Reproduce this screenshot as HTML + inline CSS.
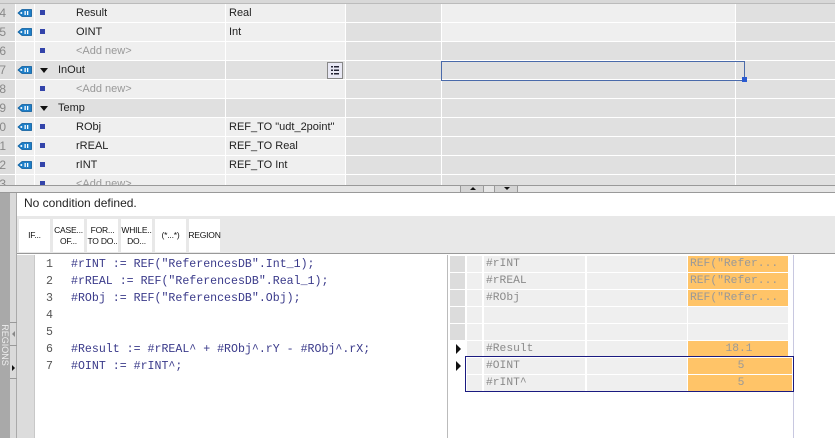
<!DOCTYPE html>
<html><head><meta charset="utf-8"><style>
*{margin:0;padding:0;box-sizing:border-box}
body{width:835px;height:438px;overflow:hidden;background:#fff;font-family:"Liberation Sans",sans-serif;font-size:11px;color:#222;position:relative}
.a{position:absolute}
.row{position:absolute;left:0;width:835px;height:19px}
.c{position:absolute;top:0;height:18px;line-height:18px;white-space:nowrap;overflow:hidden}
.code{font-family:"Liberation Mono",monospace;font-size:11.6px;color:#3a3a8a;white-space:pre}
.w{position:absolute;height:16px;line-height:16px;font-family:"Liberation Mono",monospace;font-size:11.3px;color:#8a8a8a;white-space:pre;overflow:hidden}
.btn{position:absolute;top:219px;width:31px;height:33px;background:#fff;font-size:8.5px;text-align:center;display:flex;align-items:center;justify-content:center;line-height:11px;color:#111;letter-spacing:-0.2px}
</style></head><body>
<div class="a" style="left:0;top:0;width:835px;height:4px;background:#d8d8d8;border-bottom:1px solid #bbb"></div>
<div id="rows"></div>
<script>
var rows=[
["4",1,"sq","Result","Real",0,0],
["5",1,"sq","OINT","Int",0,0],
["6",0,"sq","&lt;Add new&gt;","",0,1],
["7",1,"tri","InOut","",1,0],
["8",0,"sq","&lt;Add new&gt;","",0,1],
["9",1,"tri","Temp","",1,0],
["10",1,"sq","RObj","REF_TO \"udt_2point\"",0,0],
["11",1,"sq","rREAL","REF_TO Real",0,0],
["12",1,"sq","rINT","REF_TO Int",0,0],
["13",0,"sq","&lt;Add new&gt;","",0,1]];
var h="";
rows.forEach(function(r,i){
 var t=4+i*19, sec=r[5];
 var nb=sec?"#e0e0e0":"#efefef";
 var lb=(i<2)?"#efefef":"#e0e0e0";
 h+='<div class="row" style="top:'+t+'px">';
 h+='<div class="c" style="left:0;width:15px;background:#dcdcdc"></div>';
 h+='<div class="c" style="left:-20px;width:26px;color:#888;text-align:right;font-size:12px">'+r[0]+'</div>';
 h+='<div class="c" style="left:16px;width:18px;background:'+nb+'">'+(r[1]?'<svg width="18" height="18"><path d="M2 9 L6 5.5 H15.5 V12.5 H6 Z" fill="#1e7fc8" stroke="#0a5a9a" stroke-width="0.8"/><circle cx="5.3" cy="9" r="1" fill="#fff"/><rect x="8.5" y="7" width="1.3" height="4" fill="#fff"/><rect x="11" y="7" width="1.3" height="4" fill="#fff"/></svg>':'')+'</div>';
 h+='<div class="c" style="left:35px;width:190px;background:'+nb+'"></div>';
 if(r[2]=="sq") h+='<div class="a" style="left:40px;top:6px;width:5px;height:5px;background:#3344aa"></div>';
 else h+='<div class="a" style="left:40px;top:7px;width:0;height:0;border-left:4px solid transparent;border-right:4px solid transparent;border-top:5px solid #111"></div>';
 var nx=r[5]?58:76;
 h+='<div class="c" style="left:'+nx+'px;color:'+(r[6]?'#999':'#222')+'">'+r[3]+'</div>';
 h+='<div class="c" style="left:226px;width:119px;background:'+nb+';padding-left:3px">'+r[4].replace(/"/g,'&quot;')+'</div>';
 h+='<div class="c" style="left:346px;width:95px;background:#e0e0e0"></div>';
 h+='<div class="c" style="left:442px;width:293px;background:'+lb+'"></div>';
 h+='<div class="c" style="left:736px;width:99px;background:#e0e0e0"></div>';
 h+='</div>';
});
document.getElementById("rows").innerHTML=h;
</script>
<div class="a" style="left:327px;top:62px;width:16px;height:17px;border:1px solid #888;background:#e8e8f4"><svg width="14" height="15"><g fill="#223"><rect x="3" y="3" width="2" height="1.5"/><rect x="6" y="3" width="5" height="1.5"/><rect x="3" y="6.5" width="2" height="1.5"/><rect x="6" y="6.5" width="5" height="1.5"/><rect x="3" y="10" width="2" height="1.5"/><rect x="6" y="10" width="5" height="1.5"/></g></svg></div>
<div class="a" style="left:441px;top:61px;width:304px;height:20px;border:1px solid #4a6aaa"></div>
<div class="a" style="left:742px;top:77px;width:5px;height:5px;background:#2a5ad0"></div>
<div class="a" style="left:0;top:185px;width:835px;height:8px;background:#e6e6e6;border-top:1px solid #999;border-bottom:1px solid #999"></div>
<div class="a" style="left:460px;top:186px;width:24px;height:6px;background:#d4d4d4;border-left:1px solid #999;border-right:1px solid #999"><div class="a" style="left:9px;top:1px;border-left:3px solid transparent;border-right:3px solid transparent;border-bottom:3px solid #111"></div></div>
<div class="a" style="left:494px;top:186px;width:24px;height:6px;background:#d4d4d4;border-left:1px solid #999;border-right:1px solid #999"><div class="a" style="left:9px;top:1px;border-left:3px solid transparent;border-right:3px solid transparent;border-top:3px solid #111"></div></div>
<div class="a" style="left:0;top:193px;width:10px;height:245px;background:#a9a9a9"></div>
<div class="a" style="left:10px;top:193px;width:7px;height:245px;background:#dadada;border-right:1px solid #aaa"></div>
<div class="a" style="left:-18px;top:340px;width:46px;height:10px;transform:rotate(90deg);color:#eee;font-size:9px;line-height:10px;text-align:center">REGIONS</div>
<div class="a" style="left:10px;top:322px;width:7px;height:1px;background:#999"></div>
<div class="a" style="left:10px;top:345px;width:7px;height:1px;background:#999"></div>
<div class="a" style="left:10px;top:378px;width:7px;height:1px;background:#999"></div>
<div class="a" style="left:12px;top:331px;border-top:3px solid transparent;border-bottom:3px solid transparent;border-right:3px solid #888"></div>
<div class="a" style="left:12px;top:365px;border-top:3px solid transparent;border-bottom:3px solid transparent;border-left:3px solid #111"></div>
<div class="a" style="left:24px;top:196px;font-size:12px;color:#222">No condition defined.</div>
<div class="a" style="left:17px;top:216px;width:818px;height:38px;background:#e8e8e8;border-bottom:1px solid #999"></div>
<div class="btn" style="left:19px">IF...</div>
<div class="btn" style="left:53px">CASE...<br>OF...</div>
<div class="btn" style="left:87px">FOR...<br>TO DO..</div>
<div class="btn" style="left:121px">WHILE..<br>DO...</div>
<div class="btn" style="left:155px">(*...*)</div>
<div class="btn" style="left:189px">REGION</div>
<div class="a" style="left:17px;top:255px;width:18px;height:183px;background:#dcdcdc;border-right:1px solid #c8c8c8"></div>
<div class="a code" style="left:46px;top:256px;line-height:17px;color:#555">1
2
3
4
5
6
7</div>
<div class="a code" style="left:71px;top:256px;line-height:17px">#rINT := REF("ReferencesDB".Int_1);
#rREAL := REF("ReferencesDB".Real_1);
#RObj := REF("ReferencesDB".Obj);


#Result := #rREAL^ + #RObj^.rY - #RObj^.rX;
#OINT := #rINT^;</div>
<div class="a" style="left:447px;top:255px;width:1px;height:183px;background:#bbb"></div>
<div class="a" style="left:793px;top:255px;width:1px;height:183px;background:#c8c8e0"></div>
<div id="w"></div>
<script>
var wr=[["#rINT","REF(\"Refer..."],["#rREAL","REF(\"Refer..."],["#RObj","REF(\"Refer..."],["",""],["",""],["#Result","18.1"],["#OINT","5"],["#rINT^","5"]];
var g="";
wr.forEach(function(r,i){var t=256+i*17;var or=r[1]!=="";var wide=i>=6;
g+='<div class="w" style="left:450px;top:'+t+'px;width:15px;background:'+(i>=5?'#fff':'#dcdcdc')+'"></div>';
if(i==5||i==6) g+='<div class="a" style="left:456px;top:'+(t+3)+'px;border-top:5px solid transparent;border-bottom:5px solid transparent;border-left:5px solid #111"></div>';
g+='<div class="w" style="left:467px;top:'+t+'px;width:15px;background:#efefef"></div>';
g+='<div class="w" style="left:484px;top:'+t+'px;width:101px;background:#efefef;padding-left:2px">'+r[0]+'</div>';
g+='<div class="w" style="left:587px;top:'+t+'px;width:100px;background:#efefef"></div>';
g+='<div class="w" style="left:688px;top:'+t+'px;width:'+(wide?104:100)+'px;background:'+(or?'#ffc468':'#efefef')+';color:#999;padding-left:2px;text-align:'+(i>=5?'center':'left')+'">'+r[1]+'</div>';
});
document.getElementById("w").innerHTML=g;
</script>
<div class="a" style="left:465px;top:356px;width:329px;height:36px;border:1.5px solid #1a1a80"></div>
</body></html>
